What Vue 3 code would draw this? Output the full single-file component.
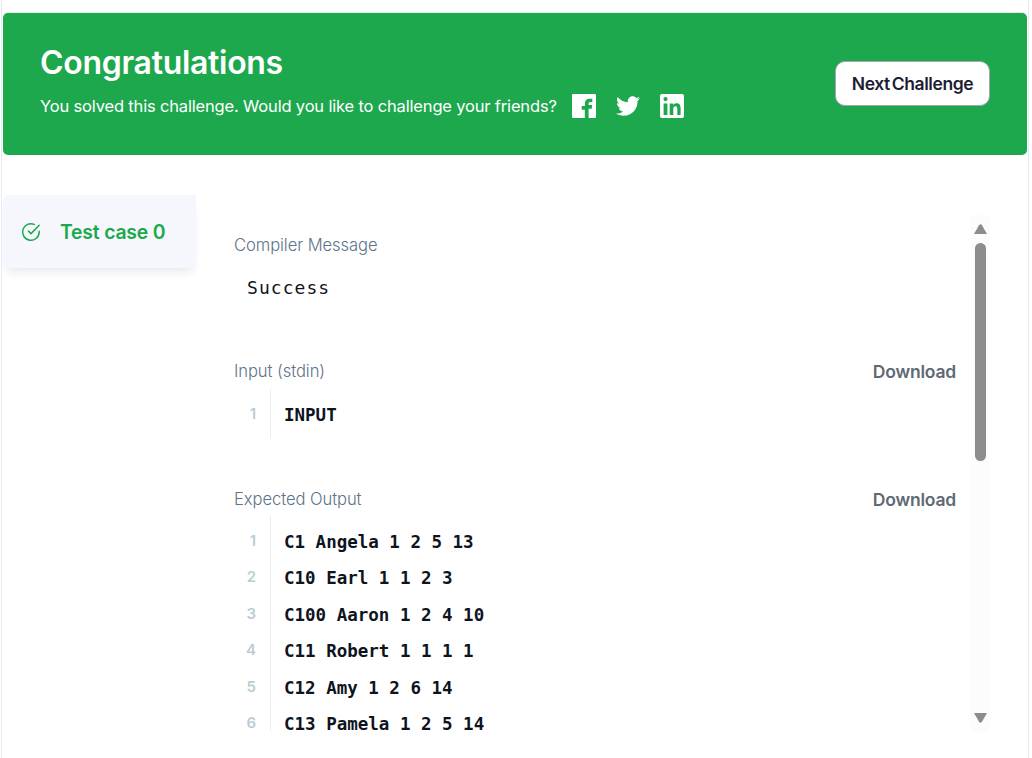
<script setup>
const expected = [
  'C1 Angela 1 2 5 13',
  'C10 Earl 1 1 2 3',
  'C100 Aaron 1 2 4 10',
  'C11 Robert 1 1 1 1',
  'C12 Amy 1 2 6 14',
  'C13 Pamela 1 2 5 14'
]
</script>

<template>
  <div class="page">
    <header class="banner">
      <div class="banner-text">
        <h1>Congratulations</h1>
        <div class="share">
          <span class="share-text">You solved this challenge. Would you like to challenge your friends?</span>
          <svg class="ico" viewBox="0 0 24 24" width="24" height="24"><path fill="#fff" d="M1.3 0h21.4C23.4 0 24 .6 24 1.3v21.4c0 .7-.6 1.3-1.3 1.3h-6.1v-9.3h3.1l.5-3.6h-3.6V9.8c0-1 .3-1.8 1.8-1.8h1.9V4.8c-.3 0-1.5-.1-2.8-.1-2.8 0-4.6 1.7-4.6 4.7v2.7H9.7v3.6h3.1V24H1.3C.6 24 0 23.4 0 22.7V1.3C0 .6.6 0 1.3 0z"/></svg>
          <svg class="ico" viewBox="0 0 24 24" width="24" height="24"><path fill="#fff" d="M24 4.6c-.9.4-1.8.7-2.8.8 1-.6 1.8-1.6 2.2-2.7-1 .6-2 1-3.1 1.2C19.3 2.9 18 2.3 16.7 2.3c-2.7 0-4.9 2.2-4.9 4.9 0 .4 0 .8.1 1.1C7.7 8.1 4.1 6.1 1.7 3.1 1.2 3.8 1 4.7 1 5.6c0 1.7.9 3.2 2.2 4.1-.8 0-1.6-.2-2.2-.6v.1c0 2.4 1.7 4.4 3.9 4.8-.4.1-.8.2-1.3.2-.3 0-.6 0-.9-.1.6 2 2.4 3.4 4.6 3.4-1.7 1.3-3.8 2.1-6.1 2.1-.4 0-.8 0-1.2-.1 2.2 1.4 4.8 2.2 7.5 2.2 9.1 0 14-7.5 14-14v-.6c1-.7 1.8-1.6 2.5-2.5z"/></svg>
          <svg class="ico" viewBox="0 0 24 24" width="24" height="24"><path fill="#fff" fill-rule="evenodd" d="M2 0h20c1.1 0 2 .9 2 2v20c0 1.1-.9 2-2 2H2c-1.1 0-2-.9-2-2V2C0 .9.9 0 2 0zm1.600 9.600V21h3.800V9.600H3.600zM5.500 3a2.100 2.100 0 1 0 0 4.200 2.100 2.100 0 0 0 0-4.200zM9.700 9.600V21h3.600v-5.800c0-1.500.3-2.900 2.100-2.900s1.900 1.700 1.900 3V21h3.300v-6.400c0-3.100-.7-5.300-4.200-5.300-1.700 0-2.800.9-3.200 1.800V9.600H9.700z"/></svg>
        </div>
      </div>
      <button class="next">Next Challenge</button>
    </header>

    <div class="body">
      <aside class="tabs">
        <div class="tab">
          <svg viewBox="0 0 20 20" width="20" height="20" fill="none" stroke="#1ba94c" stroke-width="1.5" stroke-linecap="round" stroke-linejoin="round">
            <path d="M18.2 9.3v.7a8.3 8.3 0 1 1-4.900-7.600"/>
            <path d="M18.2 3.300 10 11.600l-2.500-2.500"/>
          </svg>
          <span>Test case 0</span>
        </div>
      </aside>

      <section class="results">
        <div class="scroll">
          <div class="label">Compiler Message</div>
          <div class="message">Success</div>

          <div class="head">
            <span class="label">Input (stdin)</span>
            <span class="download">Download</span>
          </div>
          <div class="code single">
            <div class="line"><span class="num">1</span><span class="txt">INPUT</span></div>
          </div>

          <div class="head second">
            <span class="label">Expected Output</span>
            <span class="download">Download</span>
          </div>
          <div class="code many">
            <div v-for="(row, i) in expected" :key="row" class="line">
              <span class="num">{{ i + 1 }}</span><span class="txt">{{ row }}</span>
            </div>
          </div>
        </div>
        <div class="bar">
          <svg class="arrow-top" viewBox="0 0 13 10" width="13" height="10"><path fill="#8c8c8c" d="M0 10 5 1.200Q6.500-.6 8 1.200L13 10z"/></svg>
          <span class="thumb"></span>
          <svg class="arrow-bottom" viewBox="0 0 13 10" width="13" height="10"><path fill="#8c8c8c" d="M0 0 5 8.800Q6.500 10.600 8 8.800L13 0z"/></svg>
        </div>
      </section>
    </div>
  </div>
</template>

<style>
html, body { margin: 0; background: #fff; overflow: hidden; }
</style>

<style scoped>
.page {
  box-sizing: border-box;
  width: 1028px;
  height: 758px;
  margin-left: 1px;
  padding: 13px 1px 0 1px;
  border-left: 1px solid #e8e8f6;
  border-right: 1px solid #e8e8f6;
  font-family: Inter, "Noto Sans", sans-serif;
  overflow: hidden;
  background: #fff;
}
.banner {
  box-sizing: border-box;
  height: 142px;
  background: #1ea84e;
  border-radius: 5px;
  box-shadow: 0 -1px 0 #e8e8f6;
  padding: 28px 37px 0 37px;
  display: flex;
  justify-content: space-between;
  color: #fff;
}
h1 {
  margin: 0;
  font-size: 32px;
  line-height: 44px;
  font-weight: 600;
  letter-spacing: -0.3px;
}
.share {
  margin-top: 9px;
  display: flex;
  align-items: center;
  height: 24px;
}
.share-text {
  font-size: 16.5px;
  font-weight: 400;
  letter-spacing: -0.17px;
  width: 532px;
  white-space: nowrap;
}
.ico { margin-right: 20px; }
.next {
  box-sizing: border-box;
  width: 155px;
  height: 45px;
  margin-top: 20px;
  border: 1px solid #a8a3b8;
  border-radius: 10px;
  background: #fff;
  color: #1d1d33;
  font-family: Inter, sans-serif;
  font-size: 17.5px;
  font-weight: 600;
  letter-spacing: -0.42px;
  word-spacing: -2px;
  padding: 0;
}
.body {
  display: flex;
  margin-top: 40px;
}
.tabs { width: 193px; flex: none; }
.tab {
  height: 73px;
  box-sizing: border-box;
  padding: 0 0 0 18px;
  background: #f6f7fc;
  border-radius: 5px 0 0 5px;
  box-shadow: 0 8px 10px -4px rgba(30, 40, 70, 0.1);
  display: flex;
  align-items: center;
  gap: 19px;
  color: #1ba94c;
  font-size: 19.4px;
  font-weight: 600;
}
.tab span { letter-spacing: -0.2px; }
.results {
  display: flex;
  align-items: flex-start;
  flex: 1;
  margin-top: 20px;
  padding-left: 38px;
}
.scroll {
  box-sizing: border-box;
  width: 722px;
  flex: none;
  height: 522px;
  padding-top: 19px;
  overflow: hidden;
}
.label {
  color: #5e7387;
  font-size: 16.6px;
  line-height: 22px;
  letter-spacing: -0.08px;
  font-weight: 300;
}
.message {
  margin: 20px 0 0 13px;
  font-family: "DejaVu Sans Mono", monospace;
  font-size: 18px;
  line-height: 24px;
  letter-spacing: 1.05px;
  color: #0e141e;
}
.head {
  display: flex;
  justify-content: space-between;
  margin-top: 60px;
}
.head.second { margin-top: 50px; }
.download {
  font-size: 17.5px;
  font-weight: 600;
  line-height: 20px;
  padding-top: 1.500px;
  color: #5f6a75;
  letter-spacing: -0.2px;
}
.code {
  box-sizing: border-box;
  margin-top: 7px;
  background: linear-gradient(#e8eef0, #e8eef0) 36px 0 / 1px 100% no-repeat;
}
.single { height: 49px; }
.many { margin-top: 6px; height: 215px; }
.line {
  box-sizing: border-box;
  display: flex;
  height: 36.4px;
  padding-top: 18px;
  line-height: 16px;
}
.many .line:last-child { height: 34px; }
.num {
  box-sizing: border-box;
  width: 37px;
  margin-top: -1px;
  padding-right: 15px;
  text-align: right;
  font-family: Inter, sans-serif;
  font-size: 15px;
  font-weight: 600;
  color: #bccdd2;
  flex: none;
}
.txt {
  padding-left: 13px;
  font-family: "DejaVu Sans Mono", monospace;
  font-size: 17.5px;
  font-weight: 700;
  color: #0e141e;
  white-space: pre;
}
.bar {
  width: 19px;
  height: 517px;
  margin-left: 15px;
  background: #fcfcfc;
  border-radius: 4px;
  flex: none;
  display: flex;
  flex-direction: column;
  align-items: center;
}
.thumb {
  width: 11px;
  height: 218px;
  margin-top: 9px;
  background: #8c8c8c;
  border-radius: 6px;
}
.arrow-top { margin-top: 9px; display: block; }
.arrow-bottom { margin-top: auto; margin-bottom: 9px; display: block; }
</style>
